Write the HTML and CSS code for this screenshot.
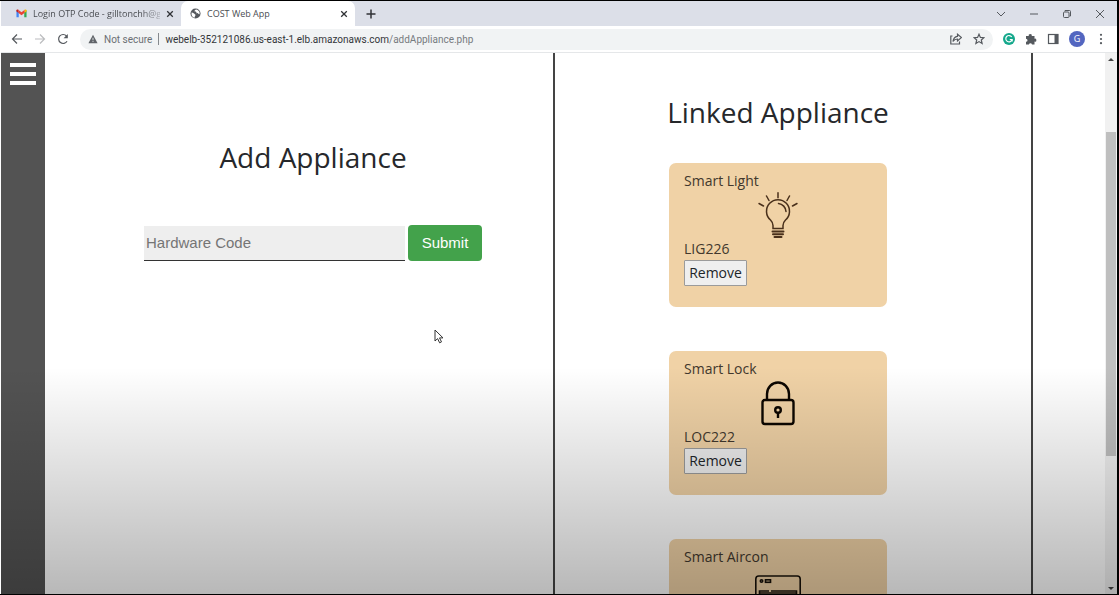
FILE: index.html
```
<!DOCTYPE html>
<html lang="en">
<head>
<meta charset="utf-8">
<title>COST Web App</title>
<link rel="stylesheet" href="styles.css">
</head>
<body>
<div class="window">
  <header class="tabstrip">
    <div class="tab">
      <svg class="favicon" viewBox="0 0 24 24" aria-hidden="true"><path fill="#4285f4" d="M1 5v15h5V9z"/><path fill="#34a853" d="M18 9v11h5V5z"/><path fill="#ea4335" d="M5 4l7 5.500 7-5.500v6.500l-7 5.500-7-5.500z"/><path fill="#c5221f" d="M1 5q0-3 4-1.500v7L1 7.500z"/><path fill="#fbbc04" d="M23 5q0-3-4-1.500v7l4-3z"/></svg>
      <span class="tab-title fading">Login OTP Code - gilltonchh@gr</span>
      <button class="plain tab-close" aria-label="Close tab"><svg viewBox="0 0 10 10"><path d="M1.500 1.500l7 7m0-7l-7 7"/></svg></button>
    </div>
    <div class="tab active">
      <svg class="favicon" viewBox="0 0 24 24" aria-hidden="true"><circle cx="12" cy="12" r="11" fill="#55595e"/><path fill="#fff" d="M4 9c2 2 4 1 5 3s4 2 3 4-2 3-2 5C5 20 2 15 4 9zM13 3c-2 2-4 2-3 4s4 0 4 3 4 1 5 3 2 0 2-2c0-4-4-8-8-8z"/></svg>
      <span class="tab-title">COST Web App</span>
      <button class="plain tab-close" aria-label="Close tab"><svg viewBox="0 0 10 10"><path d="M1.500 1.500l7 7m0-7l-7 7"/></svg></button>
    </div>
    <button class="plain new-tab" aria-label="New tab"><svg viewBox="0 0 10 10"><path d="M5 .5v9M.5 5h9"/></svg></button>
    <div class="window-controls">
      <button class="plain" aria-label="Search tabs"><svg viewBox="0 0 10 10"><path d="M1 3l4 4 4-4"/></svg></button>
      <button class="plain" aria-label="Minimize"><svg viewBox="0 0 10 10"><path d="M1 5h8"/></svg></button>
      <button class="plain" aria-label="Restore"><svg viewBox="0 0 10 10"><rect x="1.500" y="3" width="5.500" height="5.500" rx="1"/><path d="M3 2.500V1.500h4.500q1 0 1 1V7H7.500"/></svg></button>
      <button class="plain" aria-label="Close"><svg viewBox="0 0 10 10"><path d="M1 1l8 8m0-8L1 9"/></svg></button>
    </div>
  </header>
  <nav class="toolbar" aria-label="Browser">
    <div class="history">
      <button class="plain" aria-label="Back"><svg viewBox="0 0 12 12"><path d="M11 6H1.500M6 1.500L1.500 6 6 10.500"/></svg></button>
      <button class="plain disabled" aria-label="Forward"><svg viewBox="0 0 12 12"><path d="M1 6h9.500M6 1.500L10.500 6 6 10.500"/></svg></button>
      <button class="plain" aria-label="Reload"><svg viewBox="0 0 12 12"><path d="M10 8.300A4.500 4.500 0 1 1 9.500 3"/><path class="solid" d="M10.800 1v4.200H6.600z"/></svg></button>
    </div>
    <div class="address">
      <svg class="warning" viewBox="0 0 12 12" aria-hidden="true"><path fill="#5f6368" d="M6 1l5.500 10H.5z"/><path stroke="#f1f3f4" d="M6 4.500v3M6 8.500v1.200"/></svg>
      <span class="insecure">Not secure</span>
      <span class="separator"></span>
      <a class="url" href="#">webelb-352121086.us-east-1.elb.amazonaws.com<span class="path">/addAppliance.php</span></a>
      <button class="plain share" aria-label="Share"><svg viewBox="0 0 12 12"><path d="M2.500 3H.8v8h8.700V8.500M7.500 1.200L11.500 4.500 7.500 8V6Q4.500 6 3 8.500 3.500 3.800 7.500 3.300z"/></svg></button>
      <button class="plain" aria-label="Bookmark"><svg viewBox="0 0 12 12"><path d="M6 1.200l1.400 3.200 3.500.3-2.600 2.300.8 3.500L6 8.600l-3.100 1.900.8-3.500L1.100 4.700l3.500-.3z"/></svg></button>
    </div>
    <div class="extensions">
      <button class="plain" aria-label="Grammarly"><svg viewBox="0 0 12 12"><circle class="grammarly" cx="6" cy="6" r="6"/><path class="light" d="M8.700 4A3.200 3.200 0 1 0 9.100 6.500H6.800M9.200 6.400v2"/></svg></button>
      <button class="plain" aria-label="Extensions"><svg viewBox="0 0 12 12"><path class="solid" d="M1 3h2.700a1.600 1.600 0 1 1 3.100 0H9.500v2.700a1.500 1.500 0 1 1 0 2.900V11.500H7a1.600 1.600 0 0 0-3.100 0H1V8.700a1.500 1.500 0 0 0 0-3z"/></svg></button>
      <button class="plain" aria-label="Side panel"><svg viewBox="0 0 12 12"><rect x="1.500" y="1.500" width="9.500" height="9"/><path class="solid" d="M7.500 1.500H11v9H7.500z"/></svg></button>
      <button class="avatar">G</button>
      <button class="plain" aria-label="Menu"><svg viewBox="0 0 12 12"><circle class="solid" cx="6" cy="1.800" r="1.100"/><circle class="solid" cx="6" cy="6" r="1.100"/><circle class="solid" cx="6" cy="10.200" r="1.100"/></svg></button>
    </div>
  </nav>
  <div class="viewport">
    <aside class="sidebar">
      <button class="hamburger" aria-label="Open menu"><span></span><span></span><span></span></button>
    </aside>
    <main class="content">
      <section class="add">
        <h1>Add Appliance</h1>
        <form class="add-form">
          <input type="text" placeholder="Hardware Code" aria-label="Hardware Code">
          <button type="button" class="submit">Submit</button>
        </form>
      </section>
      <section class="linked">
        <h1>Linked Appliance</h1>
        <div class="cards">
          <article class="card">
            <div>Smart Light</div>
            <svg class="device" viewBox="0 0 46 46" aria-hidden="true"><g fill="none" stroke="#49301b" stroke-width="1.500" stroke-linecap="round"><path d="M18 36.500v-3q0-3-2.500-5.500a11.500 11.500 0 1 1 15 0Q28 30.500 28 33.500v3z"/><path d="M23.500 11.500a8.500 8.500 0 0 1 7.500 8M23 .8v5M11.500 4l2.500 4.500M34.500 4L32 8.500M4 11.500l4.500 2.500M42 11.500L37.500 14"/><path stroke-width="2" d="M17.500 39.500h11M18 42.300h10M19.500 45h7"/></g></svg>
            <div>LIG226</div>
            <button type="button" class="remove">Remove</button>
          </article>
          <article class="card">
            <div>Smart Lock</div>
            <svg class="device" viewBox="0 0 46 46" aria-hidden="true"><g fill="none" stroke="#0c0600" stroke-width="2.400"><rect x="7.500" y="20" width="31" height="24" rx="2.500"/><path d="M12 20v-6a11 11.500 0 0 1 22 0v6"/><circle cx="23" cy="30" r="2.800"/><path d="M23 32.500v5.500"/></g></svg>
            <div>LOC222</div>
            <button type="button" class="remove">Remove</button>
          </article>
          <article class="card">
            <div>Smart Aircon</div>
            <svg class="device" viewBox="0 0 46 46" aria-hidden="true"><g fill="none" stroke="#171008" stroke-width="1.600"><rect x="0.800" y="8" width="44.400" height="35" rx="3"/><circle cx="6.500" cy="13" r="1.200"/><rect x="10.500" y="11.800" width="5" height="2.500"/><path d="M4.500 28v-5H14M16 23h25.500v5M5 25h36"/></g></svg>
          </article>
        </div>
      </section>
    </main>
    <div class="scrollbar" aria-hidden="true">
      <svg viewBox="0 0 12 12"><path d="M3 8l3-3 3 3z"/></svg>
      <div class="track"><div class="thumb"></div></div>
      <svg viewBox="0 0 12 12"><path d="M3 5l3 3 3-3z"/></svg>
    </div>
    <div class="shade"></div>
    <svg class="cursor" viewBox="0 0 10 15" aria-hidden="true"><path fill="#fff" stroke="#333" d="M1 1v11l2.600-2.400 2 4.200 1.900-.9-2-4H9z"/></svg>
  </div>
</div>
</body>
</html>
```
FILE: styles.css
```
* { box-sizing: border-box; }
body {
  margin: 0;
  font-family: "Open Sans", "Noto Sans", sans-serif;
  color: #26282b;
  overflow: hidden;
}
button, input { font: inherit; color: inherit; }
.window {
  display: flex;
  flex-direction: column;
  height: 100vh;
  border: solid #000;
  border-width: 1px 2px 1px 0;
  padding-left: 1px;
  background: #fff;
}
.plain {
  display: flex;
  border: 0;
  padding: 0;
  background: none;
}
.plain svg {
  width: 12px;
  height: 12px;
  fill: none;
  stroke: #55595e;
  stroke-width: 1.2;
}
.plain .solid { fill: #55595e; stroke: none; }
.plain .grammarly { fill: #15a88c; stroke: none; }
.plain .light { stroke: #fff; }

.tabstrip {
  display: flex;
  align-items: center;
  height: 25px;
  flex: none;
  background: #dcdfe8;
  font-size: 9px;
  color: #4a4d52;
}
.tab {
  display: flex;
  align-items: center;
  align-self: stretch;
  gap: 6px;
  width: 180px;
  padding: 0 7px 0 15px;
}
.tab.active {
  width: 174px;
  padding-left: 9px;
  background: #fff;
  border-radius: 7px 7px 0 0;
}
.favicon { width: 11px; height: 11px; flex: none; }
.tab-title { flex: 1; white-space: nowrap; }
.fading {
  width: 0;
  mask-image: linear-gradient(to right, #000 85%, rgba(0, 0, 0, .3));
}
.tab-close svg { width: 8px; height: 8px; stroke: #303236; stroke-width: 1.6; }
.new-tab { margin-left: 11px; }
.new-tab svg { width: 10px; height: 10px; stroke: #303236; stroke-width: 1.5; }
.window-controls {
  display: flex;
  gap: 23px;
  margin-left: auto;
  padding-right: 12px;
}
.window-controls svg { width: 10px; height: 10px; stroke-width: 1; }

.toolbar {
  display: flex;
  align-items: center;
  height: 27px;
  flex: none;
  padding: 0 10px;
  border-bottom: 1px solid #e5e7e9;
}
.history { display: flex; gap: 11px; margin-right: 11px; }
.disabled { opacity: .4; }
.address {
  display: flex;
  align-items: center;
  flex: 1;
  height: 21px;
  padding: 0 8px;
  border-radius: 11px;
  background: #f1f3f4;
  font-family: Roboto, "Open Sans", sans-serif;
  font-size: 10px;
}
.warning { width: 10px; height: 10px; margin-right: 6px; }
.insecure { color: #6b6f73; }
.separator { width: 1px; height: 12px; margin: 0 6px; background: #85898d; }
.url { color: #333639; text-decoration: none; }
.path { color: #777b7f; }
.share { margin-left: auto; margin-right: 11px; }
.extensions { display: flex; align-items: center; gap: 10px; margin-left: 10px; }
.avatar {
  width: 16px;
  height: 16px;
  border: 0;
  border-radius: 50%;
  padding: 0;
  background: #5366c0;
  color: #fff;
  font-size: 9px;
  line-height: 16px;
}

.viewport {
  position: relative;
  display: flex;
  flex: 1;
  min-height: 0;
}
.sidebar { width: 44px; flex: none; padding: 10px 9px; background: #535353; }
.hamburger {
  display: flex;
  flex-direction: column;
  gap: 5px;
  width: 26px;
  border: 0;
  padding: 0;
  background: none;
}
.hamburger span { width: 100%; height: 4px; background: #fff; }
.content {
  display: grid;
  grid-template-columns: 508fr 480fr 72fr;
  flex: 1;
  overflow: hidden;
}
h1 {
  margin: 0;
  font-size: 28px;
  font-weight: 400;
  line-height: 40px;
  text-align: center;
}
.add { padding: 84px 0 0 28px; }
.add-form {
  display: flex;
  justify-content: center;
  gap: 3px;
  margin-top: 48px;
  font: 15px "Liberation Sans", Arial, sans-serif;
}
.add-form input {
  width: 261px;
  margin-top: 1px;
  border: 0;
  border-bottom: 1px solid #333;
  border-radius: 0;
  padding: 0 2px 2px;
  background: #eee;
}
.add-form input::placeholder { color: #757575; }
.submit {
  width: 74px;
  height: 36px;
  border: 0;
  border-radius: 4px;
  padding: 0 0 2px;
  background: #43a24b;
  color: #fff;
}
.linked {
  padding: 39px 30px 0 0;
  border: solid #444;
  border-width: 0 2px;
}
.cards {
  display: flex;
  flex-direction: column;
  align-items: center;
  gap: 44px;
  margin-top: 31px;
}
.card {
  width: 218px;
  min-height: 144px;
  padding: 7px 15px 21px;
  border-radius: 7px;
  background: #f0d2a6;
  font-size: 14px;
  line-height: 22px;
  color: #42382d;
}
.device { display: block; width: 46px; height: 46px; margin: 0 auto; }
.remove {
  display: block;
  width: 63px;
  height: 26px;
  border: 1px solid #9b9b9b;
  border-radius: 1px;
  padding: 0;
  background: #efefef;
  color: #212529;
}
.scrollbar {
  display: flex;
  flex-direction: column;
  width: 12px;
  flex: none;
  background: #f1f1f1;
}
.scrollbar svg { width: 12px; height: 12px; fill: #444; }
.track { flex: 1; padding: 67px 1px 0; }
.thumb { height: 72%; background: #bfbfbf; }
.shade {
  position: absolute;
  inset: 58% 0 0;
  background: linear-gradient(rgba(0, 0, 0, 0), rgba(0, 0, 0, .28));
  pointer-events: none;
}
.cursor { position: absolute; left: 433px; top: 276px; width: 10px; height: 15px; }
```
